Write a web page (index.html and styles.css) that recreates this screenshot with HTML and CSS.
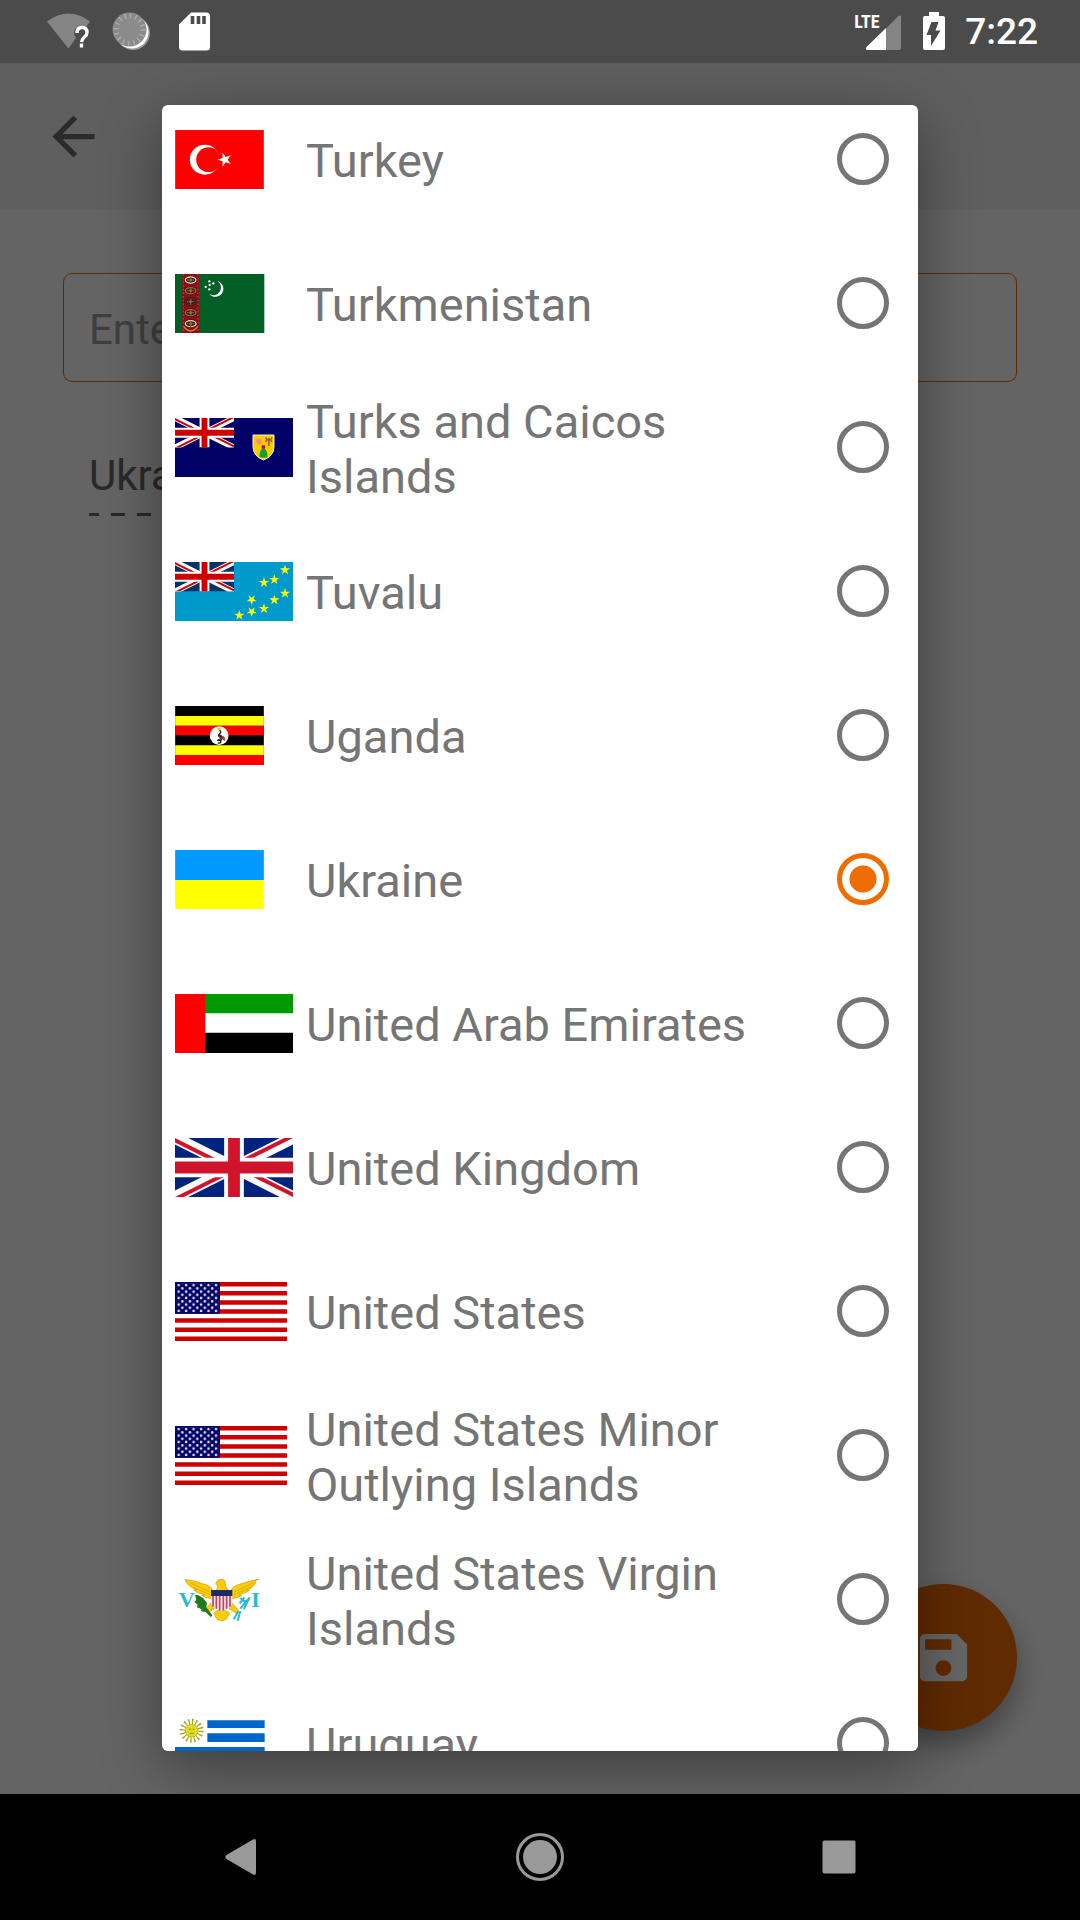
FILE: index.html
```html
<!DOCTYPE html>
<html lang="en">
<head>
<meta charset="utf-8">
<meta name="viewport" content="width=device-width, initial-scale=1">
<title>Select country</title>
<link rel="stylesheet" href="styles.css">
</head>
<body>
<svg class="defs" aria-hidden="true">
  <defs>
    <polygon id="star" points="0,-10 2.25,-3.09 9.51,-3.09 3.63,1.18 5.88,8.09 0,3.82 -5.88,8.09 -3.63,1.18 -9.51,-3.09 -2.25,-3.09"/>
    <clipPath id="jack-clip"><path d="M30 15h30v15zv15H0zH0V0zV0h30z"/></clipPath>
    <symbol id="jack" viewBox="0 0 60 30" preserveAspectRatio="none">
      <path d="M0 0h60v30H0z" fill="currentColor"/>
      <path d="M0 0l60 30M60 0L0 30" stroke="#fff" stroke-width="6"/>
      <path d="M0 0l60 30M60 0L0 30" clip-path="url(#jack-clip)" stroke="var(--red)" stroke-width="4"/>
      <path d="M30 0v30M0 15h60" stroke="#fff" stroke-width="10"/>
      <path d="M30 0v30M0 15h60" stroke="var(--red)" stroke-width="6"/>
    </symbol>
    <pattern id="us-stars" x="5" y="4" width="22.4" height="19.4" patternUnits="userSpaceOnUse">
      <circle cx="6" cy="5.5" r="4" fill="#dde"/><circle cx="17.2" cy="15.2" r="4" fill="#dde"/>
    </pattern>
    <symbol id="us" viewBox="0 0 336 177">
      <path d="M0 0h336v177H0z" fill="#fff"/>
      <path d="M0 6.8h336M0 34h336M0 61.3h336M0 88.5h336M0 115.7h336M0 143h336M0 170.2h336" stroke="#c00" stroke-width="13.6"/>
      <path d="M0 0h135v95.3H0z" fill="#006"/>
      <path d="M5 4h125v87H5z" fill="url(#us-stars)"/>
    </symbol>
    <g id="gul">
      <ellipse rx="20" ry="13" fill="#5b0d10"/>
      <ellipse rx="16" ry="9" fill="none" stroke="currentColor" stroke-width="4"/>
      <path d="M-11 0h22M0-9v18" stroke="#2d7a35" stroke-width="4"/>
      <circle r="4" fill="#c9553b"/>
    </g>
  </defs>
</svg>

<header class="status">
  <svg width="48" height="63" viewBox="44 0 48 63" role="img" aria-label="Wi-Fi, no internet">
    <path d="M47 21.500Q68.500 5.500 90 21.500L86 27Q75 23 74 34L76 38L68.500 48.500Z" fill="#848484"/>
    <path d="M77 33q0-5.500 5-5.500t5 5q0 2.500-2.500 4.500t-3 5M81.500 43.500v4" fill="none" stroke="#fff" stroke-width="3.400"/>
  </svg>
  <svg width="48" height="63" viewBox="108 0 48 63" role="img" aria-label="Syncing">
    <circle cx="133" cy="33" r="17" fill="#989898"/>
    <circle cx="132" cy="32" r="16.500" fill="#fff"/>
    <circle cx="129.500" cy="29.500" r="17" fill="#8b8b8b"/>
    <circle cx="129.500" cy="29.500" r="13.500" fill="none" stroke="#adadad" stroke-width="5" stroke-dasharray="1.300 4"/>
  </svg>
  <svg width="48" height="63" viewBox="172 0 48 63" role="img" aria-label="SD card">
    <path d="M191 12.500h15.500q3.500 0 3.500 3.500v31q0 3.500-3.500 3.500h-24q-3.500 0-3.500-3.500V24.500Z" fill="#fff"/>
    <path d="M192.500 16v8M198.500 16v8M204 16v8" stroke="#4b4b4b" stroke-width="3.600"/>
  </svg>
  <span class="spacer"></span>
  <span class="signal">
    <svg width="52" height="63" viewBox="850 0 52 63" aria-hidden="true">
      <path d="M885 28.500L897 16.500q3-2.500 3 1V48q0 2-2 2H885Z" fill="#848484"/>
      <path d="M885 28v22H867q-3.500 0-1.500-3Z" fill="#fff"/>
    </svg>
    <span class="lte">LTE</span>
  </span>
  <svg width="48" height="63" viewBox="910 0 48 63" role="img" aria-label="Battery charging">
    <path d="M929 12h10v4h4q2 0 2 2v30q0 2-2 2h-18q-2 0-2-2V18q0-2 2-2h4Z" fill="#fff"/>
    <path d="M931.500 22h7l-3 8.500h5L931 46v-11h-4.500Z" fill="#4b4b4b"/>
  </svg>
  <time class="clock">7:22</time>
</header>

<main class="app">
  <div class="toolbar">
    <button class="icon-button" aria-label="Back">
      <svg width="63" height="63" viewBox="0 0 24 24"><path d="M20 11H7.830l5.590-5.590L12 4l-8 8 8 8 1.410-1.410L7.830 13H20v-2z" fill="#6b6b6b"/></svg>
    </button>
  </div>
  <form class="form">
    <input class="field" type="text" placeholder="Enter" aria-label="Enter">
    <select class="spinner" aria-label="Country"><option>Ukraine</option></select>
  </form>
  <button class="fab" aria-label="Save">
    <svg width="63" height="63" viewBox="0 0 24 24"><path d="M17 3H5c-1.110 0-2 .9-2 2v14c0 1.100.89 2 2 2h14c1.100 0 2-.9 2-2V7l-4-4zm-5 16c-1.660 0-3-1.340-3-3s1.340-3 3-3 3 1.340 3 3-1.340 3-3 3zm3-10H5V5h10v4z" fill="#fff"/></svg>
  </button>

  <div class="scrim">
    <div class="dialog" role="dialog" aria-label="Select country">
      <ul class="countries">
        <li><label class="row">
          <span class="flag"><svg width="89" height="59" viewBox="0 0 266 177">
            <path d="M0 0h266v177H0z" fill="#f00"/><circle cx="89" cy="89" r="45" fill="#fff"/><circle cx="100" cy="89" r="37" fill="#f00"/>
            <use href="#star" transform="translate(149 89) rotate(-90) scale(2.200)" fill="#fff"/>
          </svg></span>
          <span class="name">Turkey</span><input type="radio" name="country">
        </label></li>
        <li><label class="row">
          <span class="flag"><svg width="90" height="59" viewBox="0 0 270 177">
            <path d="M0 0h268v177H0z" fill="#045f27"/><path d="M22 0h50v177H22z" fill="#8c0d1c"/>
            <path d="M25 0v177M69 0v177" stroke="#9c5a20" stroke-width="3" stroke-dasharray="5 6"/>
            <use href="#gul" x="47" y="18" color="#e0d5c0"/><use href="#gul" x="47" y="50" color="#b56a2a"/><use href="#gul" x="47" y="83" color="#4d2a20"/><use href="#gul" x="47" y="116" color="#b56a2a"/><use href="#gul" x="47" y="149" color="#eee3cc"/>
            <path d="M26 158q21 26 42 0" fill="none" stroke="#d88a1c" stroke-width="4"/>
            <path d="M127 21a24 24 0 1 1-24 39a20 20 0 1 0 24-39z" fill="#fff"/>
            <g fill="#fff"><circle cx="103" cy="22" r="3.500"/><circle cx="115" cy="28" r="3.500"/><circle cx="92" cy="39" r="3.500"/><circle cx="104" cy="33" r="3.500"/><circle cx="103" cy="46" r="3.500"/></g>
          </svg></span>
          <span class="name">Turkmenistan</span><input type="radio" name="country">
        </label></li>
        <li><label class="row">
          <span class="flag"><svg width="118" height="59" viewBox="0 0 354 177">
            <path d="M0 0h354v177H0z" fill="#006"/><use class="canton" href="#jack" width="177" height="88.500" color="#006"/>
            <path d="M234 51h63v35q0 28-31.500 40Q234 114 234 86z" fill="#fc0" stroke="#eee" stroke-width="3"/>
            <path d="M240 60l5 6 1-8 6 6 6-3 3 12-6 8-8-4z" fill="#f9917b"/>
            <path d="M272 58l4 8-4 6M291 58l-4 8 4 6M276 65h11M281.500 60v24" stroke="#a5621a" stroke-width="5" fill="none"/>
            <path d="M253 117q1-26 12-26t13 26q-12 5-25 0z" fill="#12a02b"/><path d="M260 82h10v10h-10z" fill="#b5121b"/>
          </svg></span>
          <span class="name">Turks and Caicos Islands</span><input type="radio" name="country">
        </label></li>
        <li><label class="row">
          <span class="flag"><svg width="118" height="59" viewBox="0 0 354 177">
            <path d="M0 0h354v177H0z" fill="#09c"/><use class="canton" href="#jack" width="177" height="88.500" color="#036"/>
            <g fill="#ff0"><use href="#star" transform="translate(330 24) scale(1.600)"/><use href="#star" transform="translate(298 53) scale(1.600)"/><use href="#star" transform="translate(267 62) scale(1.600)"/><use href="#star" transform="translate(330 94) scale(1.600)"/><use href="#star" transform="translate(298 114) scale(1.600)"/><use href="#star" transform="translate(230 113) scale(1.600 -1.600)"/><use href="#star" transform="translate(267 140) scale(1.600)"/><use href="#star" transform="translate(230 149) scale(1.600 -1.600)"/><use href="#star" transform="translate(193 160) scale(1.600)"/></g>
          </svg></span>
          <span class="name">Tuvalu</span><input type="radio" name="country">
        </label></li>
        <li><label class="row">
          <span class="flag"><svg width="89" height="59" viewBox="0 0 266 177">
            <path d="M0 0h266v177H0z"/><path d="M0 30h266v29H0zM0 118h266v29H0z" fill="#ff0"/><path d="M0 59h266v29H0zM0 147h266v30H0z" fill="#f00"/>
            <circle cx="132" cy="89" r="28" fill="#fff"/>
            <path d="M134 72l3 7-7 9q3 7 12 7l-4 6-10 1M138 101l-2 9-8 2M126 103l10 1" fill="none" stroke="#222" stroke-width="4"/>
            <path d="M128 85q12-2 17 12l-11 2z" fill="#333"/>
            <path d="M128 66h8v6h-8z" fill="#f0c000"/><path d="M142 90q9 0 8 14l-8-2z" fill="#e0301e"/>
          </svg></span>
          <span class="name">Uganda</span><input type="radio" name="country">
        </label></li>
        <li><label class="row">
          <span class="flag"><svg width="89" height="59" viewBox="0 0 266 177"><path d="M0 0h266v177H0z" fill="#ff0"/><path d="M0 0h266v90H0z" fill="#09f"/></svg></span>
          <span class="name">Ukraine</span><input type="radio" name="country" checked>
        </label></li>
        <li><label class="row">
          <span class="flag"><svg width="118" height="59" viewBox="0 0 354 177"><path d="M0 0h354v58H0z" fill="#090"/><path d="M0 116h354v61H0z"/><path d="M0 0h91v177H0z" fill="#f00"/></svg></span>
          <span class="name">United Arab Emirates</span><input type="radio" name="country">
        </label></li>
        <li><label class="row">
          <span class="flag"><svg width="118" height="59" viewBox="0 0 354 177"><use class="union" href="#jack" width="354" height="177" color="#00247d"/></svg></span>
          <span class="name">United Kingdom</span><input type="radio" name="country">
        </label></li>
        <li><label class="row">
          <span class="flag"><svg width="112" height="59" viewBox="0 0 336 177"><use href="#us" width="336" height="177"/></svg></span>
          <span class="name">United States</span><input type="radio" name="country">
        </label></li>
        <li><label class="row">
          <span class="flag"><svg width="112" height="59" viewBox="0 0 336 177"><use href="#us" width="336" height="177"/></svg></span>
          <span class="name">United States Minor Outlying Islands</span><input type="radio" name="country">
        </label></li>
        <li><label class="row">
          <span class="flag"><svg width="90" height="59" viewBox="0 0 270 177">
            <g stroke="#a98a10" stroke-width="1.500" fill="#fc0">
              <path d="M116 130l24-18 24 18-10 18-14 5-14-5z"/>
              <path d="M108 98L88 122l8 8 22-14zM170 98l22 24-8 8-22-14z"/>
              <path d="M30 28q30 4 56 14 24 6 28 20l-4 24q-22-2-30-10l8-2q-22-4-32-14l8-1Q36 50 30 28zM252 28q-30 4-56 14-24 6-28 20l2 24q22-2 30-10l-8-2q22-4 32-14l-8-1q28-9 28-31z"/>
              <path d="M118 64q14-10 10-20l-6-2q4-14 16-14 15 0 13 14 0 12 13 22z"/>
            </g>
            <path d="M46 38l58 28M54 52l50 22M236 38l-58 28M228 52l-50 22" stroke="#c79f10" stroke-width="2" fill="none"/>
            <path d="M108 76h64v20q0 20-32 28-32-8-32-28z" fill="#f4e8ea"/>
            <path d="M114 78v32M124 78v38M134 78v44M145 78v44M155 78v38M165 78v32" stroke="#c8405c" stroke-width="5"/>
            <path d="M108 60h64v18h-64z" fill="#1b2b6b"/>
            <path d="M60 74l10 2 14 8 12 14-2 14 18 24-4 6-16-16-14-2 2-6-14-6 2-8-10-8 6-6z" fill="#1f7a1f"/>
            <path d="M196 116l28-34M194 100l14-18M206 118l16-32M190 124l-14 24M196 124l-8 28M196 84l12 10 16-6" stroke="#27bccf" stroke-width="6" fill="none"/>
            <g class="initials"><text x="11" y="112">V</text><text x="229" y="112">I</text></g>
          </svg></span>
          <span class="name">United States Virgin Islands</span><input type="radio" name="country">
        </label></li>
        <li><label class="row">
          <span class="flag"><svg width="90" height="59" viewBox="0 0 270 177">
            <path d="M0 1h270" stroke="#eee" stroke-width="2"/>
            <path d="M97 19h172v23H97zM97 58h172v26H97zM0 99h269v26H0zM0 139h269v26H0z" fill="#06c"/>
            <circle cx="50" cy="50" r="27" fill="none" stroke="#a9a520" stroke-width="18" stroke-dasharray="4 6.600"/>
            <circle cx="50" cy="50" r="19" fill="#e3dc1a" stroke="#a9a520" stroke-width="2"/>
            <path d="M42 46h5M53 46h5M44 58h12" stroke="#8b8620" stroke-width="3"/>
          </svg></span>
          <span class="name">Uruguay</span><input type="radio" name="country">
        </label></li>
      </ul>
    </div>
  </div>
</main>

<nav class="navbar" aria-label="System">
  <button aria-label="Back"><svg width="48" height="48" viewBox="0 0 48 48"><path d="M9.500 22Q7 24 9.500 26L36 41.500Q39 43 39 39.500V8.500Q39 5 36 6.500Z" fill="#999"/></svg></button>
  <button aria-label="Home"><svg width="48" height="48" viewBox="0 0 48 48"><circle cx="24" cy="24" r="22.500" fill="none" stroke="#999" stroke-width="3"/><circle cx="24" cy="24" r="17" fill="#999"/></svg></button>
  <button aria-label="Recent apps"><svg width="48" height="48" viewBox="0 0 48 48"><rect x="7.500" y="7.500" width="33" height="33" rx="2" fill="#999"/></svg></button>
</nav>
</body>
</html>
```

FILE: styles.css
```css
* {
  box-sizing: border-box;
}

body {
  margin: 0;
  height: 100vh;
  display: flex;
  flex-direction: column;
  overflow: hidden;
  font-family: Roboto, "Noto Sans", sans-serif;
  background: #fafafa;
}

svg {
  display: block;
}

button {
  margin: 0;
  padding: 0;
  border: 0;
  background: none;
}

.defs {
  position: absolute;
  width: 0;
  height: 0;
}

/* Status bar */
.status {
  display: flex;
  align-items: center;
  height: 63px;
  padding: 0 42px 0 44px;
  gap: 16px;
  background: #4b4b4b;
  color: #fff;
}

.spacer {
  flex: 1;
}

.signal {
  position: relative;
  margin-right: -9px;
}

.lte {
  position: absolute;
  left: 3px;
  top: 10px;
  font-family: "Roboto Condensed", "Liberation Sans Narrow", Roboto, sans-serif;
  font-size: 18px;
  line-height: 24px;
  font-weight: 700;
}

.clock {
  margin-left: -9px;
  font-size: 37px;
  line-height: 48px;
  font-weight: 500;
}

/* Screen under the dialog */
.app {
  position: relative;
  flex: 1;
  min-height: 0;
}

.toolbar {
  display: flex;
  align-items: center;
  height: 147px;
  padding: 0 42px;
  background: #eee;
}

.form {
  display: flex;
  flex-direction: column;
  align-items: flex-start;
  gap: 56px;
  padding: 63px;
}

.field {
  width: 100%;
  height: 109px;
  padding: 3px 25px 0;
  border: 1px solid #ef6c00;
  border-radius: 9px;
  background: none;
  font: 42px/50px Roboto, sans-serif;
}

.field::placeholder {
  color: #9e9e9e;
  opacity: 1;
}

.spinner {
  appearance: none;
  width: 50%;
  height: 78px;
  margin-left: 26px;
  padding: 0 0 2px;
  border: 0;
  background: repeating-linear-gradient(90deg, #666 0 10px, transparent 10px 22px, #666 22px 26px) left bottom / 100% 3px no-repeat;
  color: #666;
  font: 42px/50px Roboto, sans-serif;
}

.fab {
  position: absolute;
  right: 63px;
  bottom: 63px;
  display: grid;
  place-items: center;
  width: 147px;
  height: 147px;
  border-radius: 50%;
  background: #ef6c00;
  box-shadow: 0 14px 28px rgba(0, 0, 0, 0.35);
}

/* Dialog */
.scrim {
  position: absolute;
  inset: 0;
  display: flex;
  justify-content: center;
  padding: 42px 0 43px;
  background: rgba(0, 0, 0, 0.6);
}

.dialog {
  width: 70%;
  overflow: hidden;
  border-radius: 6px;
  background: #fff;
  box-shadow: 0 16px 60px rgba(0, 0, 0, 0.4);
}

/* The list is scrolled part-way into its first visible row */
.countries {
  margin: -17px 0 0;
  padding: 0;
  list-style: none;
}

.row {
  display: flex;
  align-items: center;
  height: 144px;
  padding: 0 29px 0 13px;
}

.flag {
  width: 131px;
  margin-bottom: 1px;
}

.canton {
  --red: #c00;
}

.union {
  --red: #cf142b;
}

.initials {
  fill: #27bccf;
  font: 700 66px "Liberation Serif", serif;
}

.name {
  flex: 1;
  padding: 1px 16px 0 0;
  color: #757575;
  font-size: 47px;
  line-height: 55px;
}

.row input {
  appearance: none;
  width: 52px;
  height: 52px;
  margin: 0 0 2px;
  border: 5px solid #757575;
  border-radius: 50%;
  background: #fff;
}

.row input:checked {
  border-color: #ef6c00;
  background: radial-gradient(circle, #ef6c00 13px, #fff 14px);
}

/* System navigation */
.navbar {
  display: grid;
  grid-template-columns: repeat(3, 1fr);
  align-items: center;
  height: 126px;
  padding: 0 92px;
  background: #000;
}

.navbar button {
  display: grid;
  place-items: center;
}
```
